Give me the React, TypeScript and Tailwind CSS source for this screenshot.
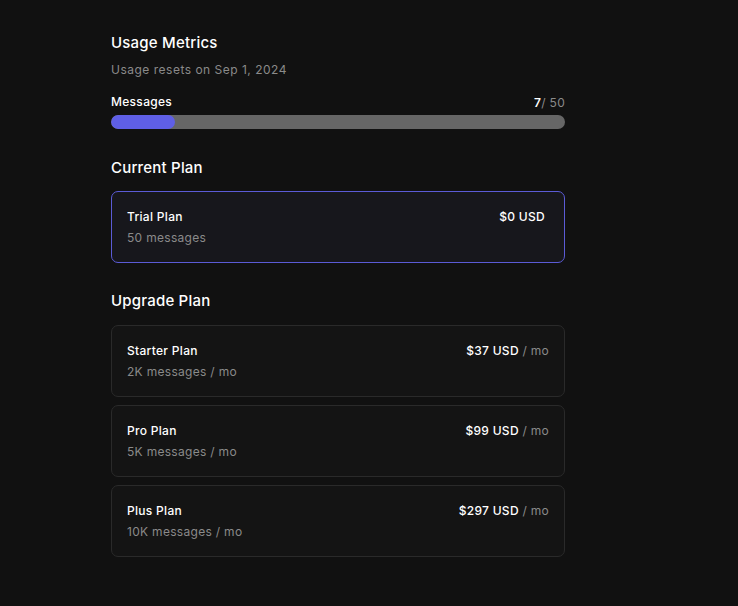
const plans = [
  { name: 'Starter Plan', price: '$37 USD', limit: '2K messages / mo' },
  { name: 'Pro Plan', price: '$99 USD', limit: '5K messages / mo' },
  { name: 'Plus Plan', price: '$297 USD', limit: '10K messages / mo' },
]

export default function App() {
  const used = 7
  const total = 50

  return (
    <div className="min-h-screen bg-[#111111] text-white font-['Inter',sans-serif]">
      <div className="w-[454px] ml-[111px] pt-[32px]">
        <h2 className="text-[15px] leading-[22px] font-medium tracking-[0.2px]">Usage Metrics</h2>
        <p className="mt-[8px] text-[12px] leading-[16px] text-[#8a8a8a] tracking-[0.5px]">Usage resets on Sep 1, 2024</p>

        <div className="mt-[16px] flex justify-between items-end">
          <span className="text-[12px] leading-[16px] font-medium tracking-[0.3px]">Messages</span>
          <span className="text-[12px] leading-[16px] text-[#8a8a8a] tracking-[0.3px] translate-y-[1px]">
            <span className="text-white font-semibold">{used}</span>/ {total}
          </span>
        </div>
        <div className="mt-[5px] h-[14px] rounded-full bg-[#666666] overflow-hidden">
          <div className="h-full rounded-full bg-[#5f5fe6]" style={{ width: `${(used / total) * 100}%` }} />
        </div>

        <h2 className="mt-[28px] text-[15px] leading-[22px] font-medium tracking-[0.2px]">Current Plan</h2>
        <div className="mt-[12px] h-[72px] rounded-[7px] border border-[#5b5bd6] bg-[#17171c] pl-[15px] pr-[19px] pt-[16px]">
          <div className="flex justify-between text-[12px] leading-[18px] font-medium tracking-[0.3px]">
            <span>Trial Plan</span>
            <span>$0 USD</span>
          </div>
          <p className="mt-[4px] text-[12px] leading-[16px] text-[#8a8a8a] tracking-[0.3px]">50 messages</p>
        </div>

        <h2 className="mt-[27px] text-[15px] leading-[22px] font-medium tracking-[0.2px]">Upgrade Plan</h2>
        <div className="mt-[13px] flex flex-col gap-[8px]">
          {plans.map((p) => (
            <div key={p.name} className="h-[72px] rounded-[7px] border border-[#2a2a2a] bg-[#141414] pl-[15px] pr-[15px] pt-[16px]">
              <div className="flex justify-between text-[12px] leading-[18px] font-medium tracking-[0.3px]">
                <span>{p.name}</span>
                <span>
                  {p.price} <span className="text-[#8a8a8a] font-normal">/ mo</span>
                </span>
              </div>
              <p className="mt-[4px] text-[12px] leading-[16px] text-[#8a8a8a] tracking-[0.3px]">{p.limit}</p>
            </div>
          ))}
        </div>
      </div>
    </div>
  )
}
